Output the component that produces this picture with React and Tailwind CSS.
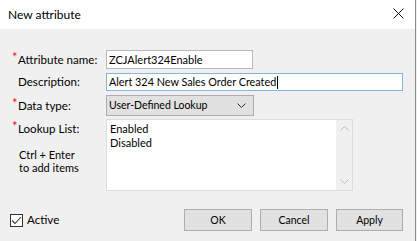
import React from "react";

const Star = () => (
  <span className="inline-block w-[6px] text-[13px] leading-none text-[#e81123] relative -top-[2px]">*</span>
);

export default function App() {
  return (
    <div className="flex w-[417px] h-[241px] overflow-hidden text-[12px] text-black whitespace-nowrap" style={{ fontFamily: 'Lato, "Segoe UI", sans-serif' }}>
      <div className="flex flex-col w-[415px] h-full bg-[#f0f0f0]">
        {/* Title bar */}
        <div className="flex items-center justify-between h-[29px] bg-white pl-[8px] pr-[10px]">
          <span className="leading-none">New attribute</span>
          <svg width="11" height="11" viewBox="0 0 11 11" className="mr-[1px] -mt-[2px]">
            <path d="M0.5 0.5 L10.5 10.5 M10.5 0.5 L0.5 10.5" stroke="#111" strokeWidth="1" />
          </svg>
        </div>

        {/* Body */}
        <div className="flex flex-col pt-[21px]">
          <div className="flex items-center h-[19px]">
            <div className="w-[106px] pl-[12px] leading-none text-[11.6px]"><Star />Attribute name:</div>
            <div className="w-[147px] h-[19px] bg-white border border-[#b9b9b9] flex items-center pl-[2px] leading-none text-[11px]">ZCJAlert324Enable</div>
          </div>

          <div className="flex items-center h-[18px] mt-[4px]">
            <div className="w-[106px] pl-[18px] leading-none text-[11.6px]">Description:</div>
            <div className="w-[297px] h-[18px] bg-white border border-[#86b3e0] flex items-center pl-[2px] leading-none text-[10.8px]">
              Alert 324 New Sales Order Created<span className="inline-block w-[1px] h-[13px] bg-black ml-[1px]" />
            </div>
          </div>

          <div className="flex items-center h-[21px] mt-[4px]">
            <div className="w-[106px] pl-[12px] leading-none text-[11.6px]"><Star />Data type:</div>
            <div className="w-[148px] h-[21px] bg-[#e1e1e1] border border-[#adadad] flex items-center justify-between pl-[2px] pr-[7px] leading-none">
              <span className="text-[10.5px]">User-Defined Lookup</span>
              <svg width="9" height="5" viewBox="0 0 9 5">
                <path d="M0.5 0.5 L4.5 4.5 L8.5 0.5" stroke="#333" strokeWidth="1" fill="none" />
              </svg>
            </div>
          </div>

          <div className="flex h-[72px] mt-[3px]">
            <div className="w-[106px] flex flex-col">
              <div className="pl-[12px] mt-[3px] leading-[13px] text-[11.6px]"><Star />Lookup List:</div>
              <div className="pl-[19px] mt-[13px] leading-[13px] text-[11px]">
                <div>Ctrl + Enter</div>
                <div>to add items</div>
              </div>
            </div>
            <div className="w-[247px] h-[72px] bg-white border border-[#dcdcdc] flex">
              <div className="flex-1 pl-[3px] pt-[2px] leading-[14px] text-[11px]">
                <div>Enabled</div>
                <div>Disabled</div>
              </div>
              <div className="w-[16px] h-full bg-[#f0f0f0] flex flex-col items-center justify-between py-[6px]">
                <svg width="9" height="5" viewBox="0 0 9 5">
                  <path d="M0.5 4.5 L4.5 0.5 L8.5 4.5" stroke="#b8b8b8" strokeWidth="1" fill="none" />
                </svg>
                <svg width="9" height="5" viewBox="0 0 9 5">
                  <path d="M0.5 0.5 L4.5 4.5 L8.5 0.5" stroke="#b8b8b8" strokeWidth="1" fill="none" />
                </svg>
              </div>
            </div>
          </div>

          <div className="flex items-center h-[22px] mt-[18px]">
            <div className="flex items-center w-[184px] pl-[10px]">
              <div className="w-[13px] h-[13px] border border-[#333] bg-white flex items-center justify-center">
                <svg width="11" height="9" viewBox="0 0 11 9">
                  <path d="M1 4.5 L4 7.5 L10 1" stroke="#333" strokeWidth="1.1" fill="none" />
                </svg>
              </div>
              <span className="ml-[4px] leading-none text-[11.6px]">Active</span>
            </div>
            <div className="flex gap-[8px] text-[10.5px]">
              <div className="w-[68px] h-[22px] bg-[#e1e1e1] border border-[#adadad] flex items-center justify-center leading-none">OK</div>
              <div className="w-[68px] h-[22px] bg-[#e1e1e1] border border-[#adadad] flex items-center justify-center leading-none">Cancel</div>
              <div className="w-[67px] h-[22px] bg-[#e1e1e1] border border-[#adadad] flex items-center justify-center leading-none">Apply</div>
            </div>
          </div>
        </div>
      </div>
      <div className="w-[1px] h-full bg-[#8a8a8a]" />
      <div className="w-[1px] h-full bg-[#f0f0f0]" />
    </div>
  );
}
